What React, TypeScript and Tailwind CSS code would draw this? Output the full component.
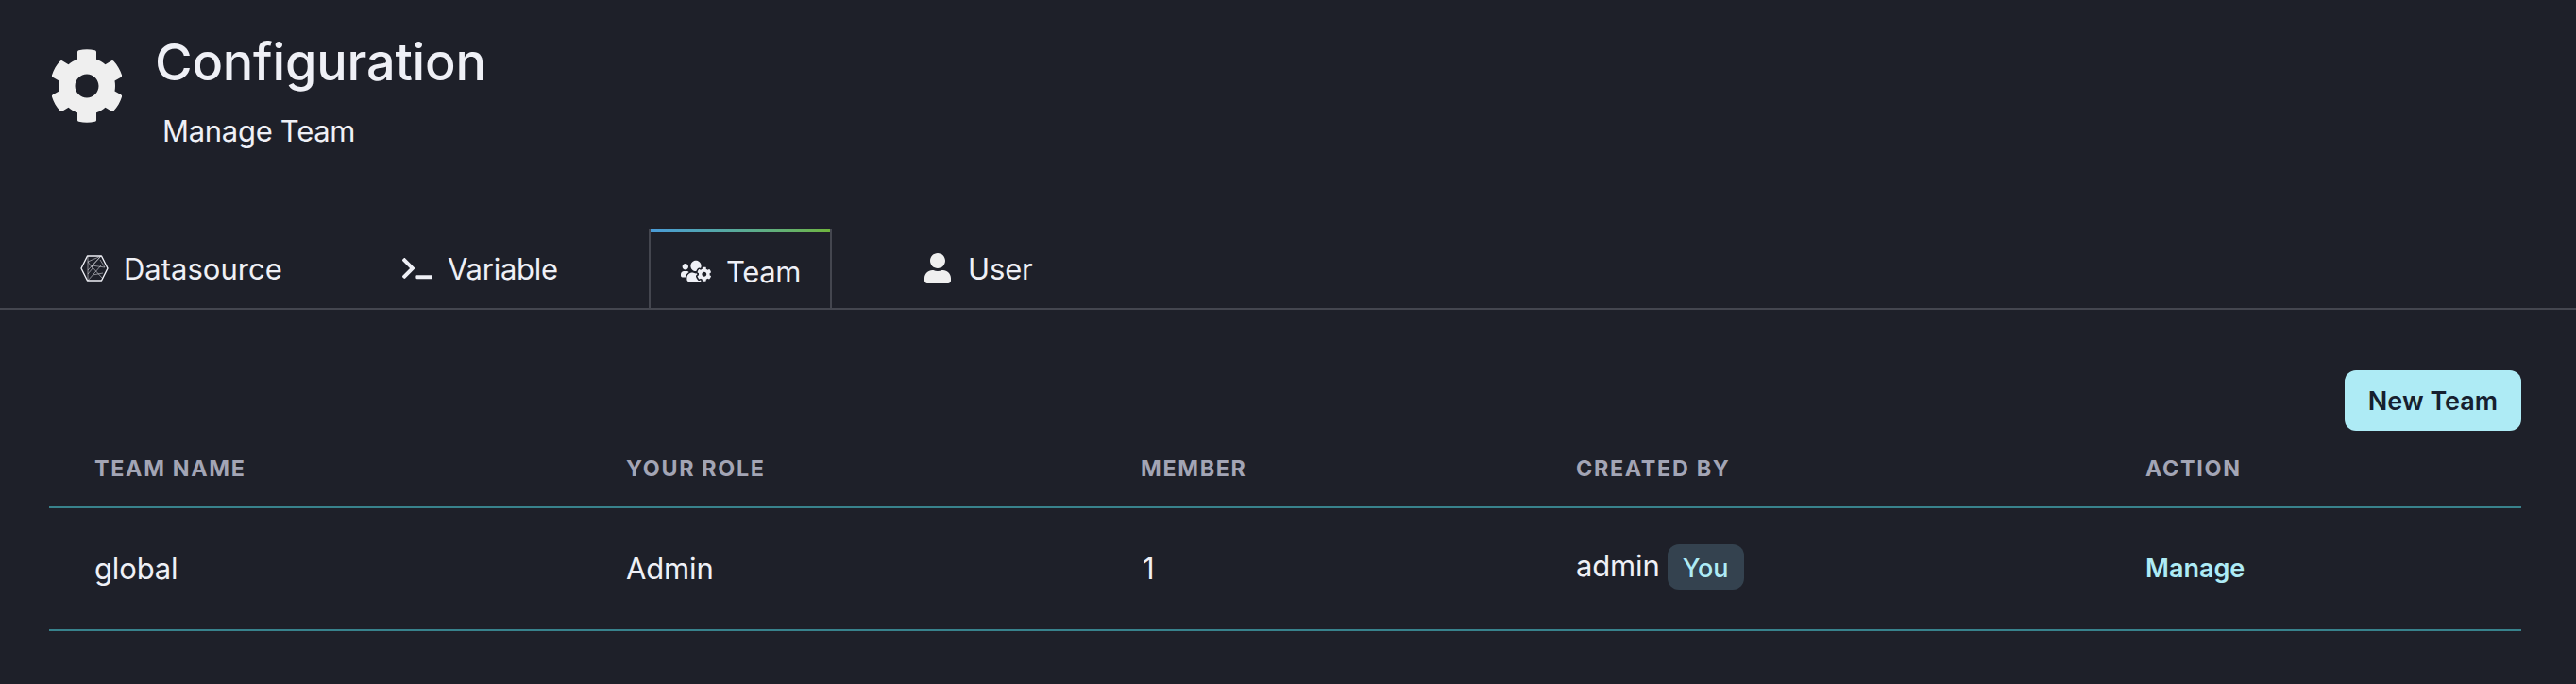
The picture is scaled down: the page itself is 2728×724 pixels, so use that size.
import { FaCog, FaTerminal, FaUser, FaUsersCog } from 'react-icons/fa';

function MeshIcon() {
  return (
    <svg viewBox="0 0 30 28" className="h-7 w-[30px] shrink-0" fill="none" stroke="currentColor" strokeLinejoin="round">
      <path d="M7.500 1h15L29 14l-6.500 13h-15L1 14z" strokeWidth="1.4" />
      <path d="M8 1v26M8 7l14-6L8 16M22 1l-10 11 12 13M8 27 22 11M21 5l5 8-14-2M8 7l5 7-5 6M13 21l11-2" strokeWidth="0.8" opacity="0.65" />
    </svg>
  );
}

const columns = ['TEAM NAME', 'YOUR ROLE', 'MEMBER', 'CREATED BY', 'ACTION'];

export default function App() {
  return (
    <div className="flex h-[724px] w-[2728px] flex-col bg-[#1e2029] font-['Inter',sans-serif] text-[31px] leading-[48px] tracking-[-0.15px] text-[#eff0f6]">
      <header className="flex h-[242px] pl-[52px] pt-8">
        <FaCog className="mt-[19px] h-20 w-20 text-[#efefef]" />
        <div className="ml-8 flex flex-col items-start">
          <h1 className="text-[54px] font-medium leading-[68px] tracking-[-0.2px]">Configuration</h1>
          <p className="ml-2 mt-[15px] tracking-[-0.3px]">Manage Team</p>
        </div>
      </header>
      <nav className="flex h-[86px] border-b-2 border-[#44464f]">
        <div className="flex h-[84px] w-[426px] items-center gap-4 pl-[85px]">
          <MeshIcon />
          <span className="pt-px tracking-normal">Datasource</span>
        </div>
        <div className="flex h-[84px] w-[261px] items-center gap-4">
          <FaTerminal className="h-8 w-8 shrink-0" />
          <span className="pt-px tracking-[-0.25px]">Variable</span>
        </div>
        <div className="flex w-[194px] flex-col border-x-2 border-[#44464f]">
          <div className="h-1 bg-linear-to-r from-[#4a9bd8] to-[#6fb53c]" />
          <div className="flex h-20 items-center gap-4 pl-8 pt-0.5">
            <FaUsersCog className="h-8 w-8" />
            <span className="pt-px tracking-[-0.4px]">Team</span>
          </div>
        </div>
        <div className="flex h-[84px] items-center gap-4 pl-24">
          <FaUser className="h-8 w-8 text-[#efefef]" />
          <span className="pt-px">User</span>
        </div>
      </nav>
      <main className="flex flex-col pl-[52px] pr-[58px] pt-16">
        <button className="flex h-16 w-[187px] items-center justify-center self-end rounded-xl bg-[#aeebf5] pt-0.5 text-[27px] font-semibold tracking-normal text-[#16202f]">
          New Team
        </button>
        <div className="grid h-[82px] grid-cols-[563px_545px_461px_603px_1fr] items-center border-b-2 border-[#38828c] text-[23.3px] font-bold tracking-[1.7px] text-[#a3a5b5]">
          {columns.map((title) => (
            <div key={title} className="pl-12">{title}</div>
          ))}
        </div>
        <div className="grid h-[130px] grid-cols-[563px_545px_461px_603px_1fr] items-center border-b-2 border-[#38828c]">
          <div className="pl-12">global</div>
          <div className="pl-12">Admin</div>
          <div className="pl-[50px]">1</div>
          <div className="flex items-center gap-2 pl-12">
            <span className="pb-[7px]">admin</span>
            <span className="mb-1 flex h-12 w-[81px] items-center justify-center rounded-xl bg-[#34424f] pt-[3px] text-[27px] font-medium tracking-normal text-[#aeebf5]">You</span>
          </div>
          <div className="pl-12 text-[27px] font-semibold tracking-normal text-[#aeebf5]">Manage</div>
        </div>
      </main>
    </div>
  );
}
